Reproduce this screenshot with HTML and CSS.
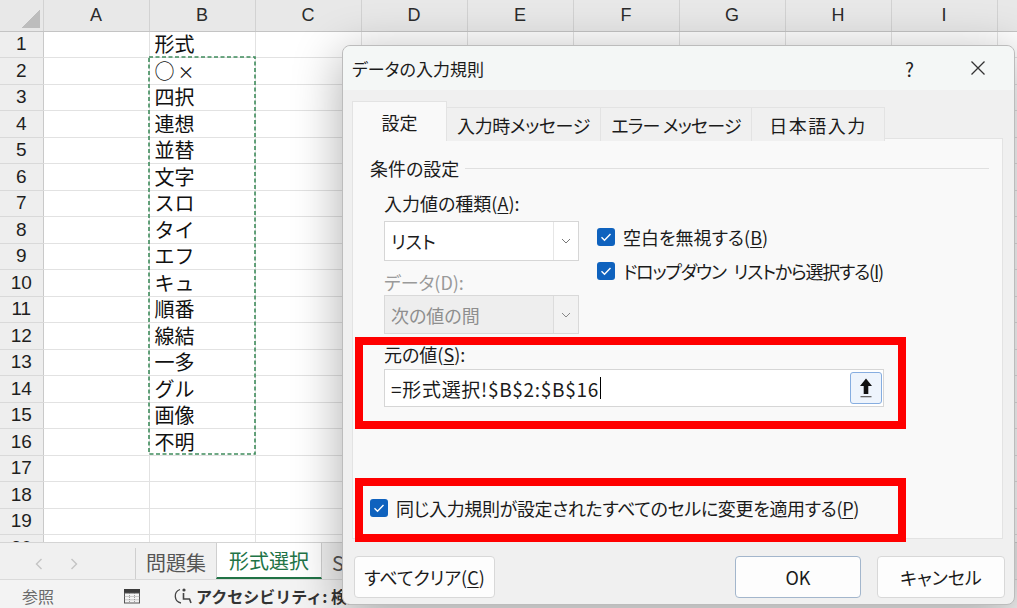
FILE: index.html
```html
<!DOCTYPE html>
<html lang="ja">
<head>
<meta charset="utf-8">
<title>データの入力規則</title>
<link rel="stylesheet" href="styles.css">
</head>
<body>
<div class="app">
  <div class="sheet">
    <table class="grid">
      <colgroup><col class="rhc"><col class="cw" span="10"></colgroup>
      <thead>
        <tr><th class="corner"></th><th>A</th><th>B</th><th>C</th><th>D</th><th>E</th><th>F</th><th>G</th><th>H</th><th>I</th><th>J</th></tr>
      </thead>
      <tbody>
        <tr><th>1</th><td></td><td>形式</td><td></td><td></td><td></td><td></td><td></td><td></td><td></td><td></td></tr>
        <tr><th>2</th><td></td><td>○<span class="x">×</span></td><td></td><td></td><td></td><td></td><td></td><td></td><td></td><td></td></tr>
        <tr><th>3</th><td></td><td>四択</td><td></td><td></td><td></td><td></td><td></td><td></td><td></td><td></td></tr>
        <tr><th>4</th><td></td><td>連想</td><td></td><td></td><td></td><td></td><td></td><td></td><td></td><td></td></tr>
        <tr><th>5</th><td></td><td>並替</td><td></td><td></td><td></td><td></td><td></td><td></td><td></td><td></td></tr>
        <tr><th>6</th><td></td><td>文字</td><td></td><td></td><td></td><td></td><td></td><td></td><td></td><td></td></tr>
        <tr><th>7</th><td></td><td>スロ</td><td></td><td></td><td></td><td></td><td></td><td></td><td></td><td></td></tr>
        <tr><th>8</th><td></td><td>タイ</td><td></td><td></td><td></td><td></td><td></td><td></td><td></td><td></td></tr>
        <tr><th>9</th><td></td><td>エフ</td><td></td><td></td><td></td><td></td><td></td><td></td><td></td><td></td></tr>
        <tr><th>10</th><td></td><td>キュ</td><td></td><td></td><td></td><td></td><td></td><td></td><td></td><td></td></tr>
        <tr><th>11</th><td></td><td>順番</td><td></td><td></td><td></td><td></td><td></td><td></td><td></td><td></td></tr>
        <tr><th>12</th><td></td><td>線結</td><td></td><td></td><td></td><td></td><td></td><td></td><td></td><td></td></tr>
        <tr><th>13</th><td></td><td>一多</td><td></td><td></td><td></td><td></td><td></td><td></td><td></td><td></td></tr>
        <tr><th>14</th><td></td><td>グル</td><td></td><td></td><td></td><td></td><td></td><td></td><td></td><td></td></tr>
        <tr><th>15</th><td></td><td>画像</td><td></td><td></td><td></td><td></td><td></td><td></td><td></td><td></td></tr>
        <tr><th>16</th><td></td><td>不明</td><td></td><td></td><td></td><td></td><td></td><td></td><td></td><td></td></tr>
        <tr><th>17</th><td></td><td></td><td></td><td></td><td></td><td></td><td></td><td></td><td></td><td></td></tr>
        <tr><th>18</th><td></td><td></td><td></td><td></td><td></td><td></td><td></td><td></td><td></td><td></td></tr>
        <tr><th>19</th><td></td><td></td><td></td><td></td><td></td><td></td><td></td><td></td><td></td><td></td></tr>
        <tr><th>20</th><td></td><td></td><td></td><td></td><td></td><td></td><td></td><td></td><td></td><td></td></tr>
      </tbody>
    </table>
    <svg class="marquee" viewBox="0 0 108 399" width="108" height="399"><rect x="1" y="1" width="106" height="397" fill="none" stroke="#3f8c5c" stroke-width="1.6" stroke-dasharray="4 2.5"/></svg>
  </div>

  <div class="tabbar">
    <div class="navs">
      <svg width="8" height="12" viewBox="0 0 8 12"><path d="M6.5 1 1.5 6l5 5" fill="none" stroke="#c4c4c4" stroke-width="1.4"/></svg>
      <svg width="8" height="12" viewBox="0 0 8 12"><path d="M1.5 1l5 5-5 5" fill="none" stroke="#c4c4c4" stroke-width="1.4"/></svg>
    </div>
    <div class="stab">問題集</div>
    <div class="stab active">形式選択</div>
    <div class="stab">Sheet3</div>
  </div>

  <div class="statusbar">
    <span class="st-ref">参照</span>
    <svg class="st-ico" width="18" height="16" viewBox="0 0 18 16"><rect x="1" y="1" width="16" height="4" fill="#3b3b3b"/><rect x="1.5" y="5" width="15" height="10" fill="none" stroke="#555" stroke-width="1"/><path d="M6.5 5v10M11.5 5v10M1.5 8.5h15M1.5 11.8h15" stroke="#888" stroke-width=".8" stroke-dasharray="1 1"/></svg>
    <span class="st-acc">
      <svg width="20" height="18" viewBox="0 0 20 18"><path d="M7 2.5A7 7 0 0 0 8 16" fill="none" stroke="#444" stroke-width="1.3"/><circle cx="11" cy="3" r="1.6" fill="#444"/><path d="M10.5 6v6h6l1.5 4" fill="none" stroke="#444" stroke-width="1.6"/></svg>
      <span>アクセシビリティ: 検討が必要です</span>
    </span>
  </div>
</div>

<div class="dialog">
  <div class="titlebar">
    <span class="dtitle">データの入力規則</span>
    <span class="help">?</span>
    <svg class="close" width="16" height="16" viewBox="0 0 16 16"><path d="M1.5 1.5l13 13M14.5 1.5l-13 13" stroke="#333" stroke-width="1.3"/></svg>
  </div>
  <div class="dbody">
    <div class="tabs">
      <div class="tab active">設定</div>
      <div class="tab t2">入力時メッセージ</div>
      <div class="tab t3">エラー メッセージ</div>
      <div class="tab t4">日本語入力</div>
    </div>
    <div class="panel">
      <div class="legend"><span>条件の設定</span><i class="rule"></i></div>
      <div class="criteria">
        <div class="leftcol">
          <div class="lbl">入力値の種類(<u>A</u>):</div>
          <div class="select">
            <span class="sv">リスト</span>
            <span class="sbtn"><svg width="10" height="6" viewBox="0 0 10 6"><path d="M1 1l4 4 4-4" fill="none" stroke="#777" stroke-width="1"/></svg></span>
          </div>
          <div class="lbl dis">データ(D):</div>
          <div class="select disabled">
            <span class="sv">次の値の間</span>
            <span class="sbtn"><svg width="10" height="6" viewBox="0 0 10 6"><path d="M1 1l4 4 4-4" fill="none" stroke="#888" stroke-width="1"/></svg></span>
          </div>
        </div>
        <div class="rightcol">
          <div class="cb"><span class="box"><svg width="18" height="18" viewBox="0 0 18 18"><path d="M4.5 9.3l3 3 6-6.3" fill="none" stroke="#fff" stroke-width="1.4"/></svg></span><span>空白を無視する(<u>B</u>)</span></div>
          <div class="cb"><span class="box"><svg width="18" height="18" viewBox="0 0 18 18"><path d="M4.5 9.3l3 3 6-6.3" fill="none" stroke="#fff" stroke-width="1.4"/></svg></span><span class="tight">ドロップダウン リストから選択する(<u>I</u>)</span></div>
        </div>
      </div>
      <div class="source">
        <div class="lbl">元の値(<u>S</u>):</div>
        <div class="input">
          <span class="iv">=形式選択!$B$2:$B$16</span><span class="caret"></span>
          <span class="pick"><svg width="14" height="22" viewBox="0 0 14 22"><path d="M7 1.5 13 9H9.3v8H4.7V9H1z" fill="#111"/><rect x="1.5" y="19" width="11" height="1.3" fill="#666"/></svg></span>
        </div>
      </div>
      <div class="cb apply"><span class="box"><svg width="18" height="18" viewBox="0 0 18 18"><path d="M4.5 9.3l3 3 6-6.3" fill="none" stroke="#fff" stroke-width="1.4"/></svg></span><span class="snug">同じ入力規則が設定されたすべてのセルに変更を適用する(<u>P</u>)</span></div>
    </div>
    <div class="buttons">
      <button class="btn">すべてクリア(<u>C</u>)</button>
      <span class="spacer"></span>
      <button class="btn ok">OK</button>
      <button class="btn cancel">キャンセル</button>
    </div>
  </div>
  <div class="mark m1"></div>
  <div class="mark m2"></div>
</div>
</body>
</html>
```

FILE: styles.css
```css
* { box-sizing: border-box; }
html, body { margin: 0; padding: 0; }
body {
  width: 1017px;
  height: 608px;
  overflow: hidden;
  position: relative;
  background: #fff;
  font-family: "Noto Sans CJK JP", "Noto Sans", sans-serif;
}

.app { display: flex; flex-direction: column; height: 608px; }

/* ---------- sheet ---------- */
.sheet { position: relative; height: 542px; overflow: hidden; flex: none; }
.grid { border-collapse: collapse; table-layout: fixed; width: 1103px; }
.grid col.rhc { width: 43px; }
.grid col.cw { width: 106px; }
.grid thead th {
  height: 31px;
  padding: 0;
  background: #e8e8e8;
  border-right: 1px solid #d2d2d2;
  border-bottom: 1px solid #c4c4c4;
  font: 18px "Liberation Sans", Arial, sans-serif;
  color: #2b2b2b;
  font-weight: normal;
}
.grid thead th.corner {
  background: #e8e8e8 linear-gradient(135deg, transparent 50%, #bdbdbd 50%) no-repeat right 3px bottom 3px / 20px 18px;
}
.grid tbody tr { height: 26.5px; }
.grid tbody th {
  padding: 0;
  background: #eeeeee;
  border-right: 1px solid #c9c9c9;
  border-bottom: 1px solid #d9d9d9;
  font: 19px "Liberation Sans", Arial, sans-serif;
  color: #1f1f1f;
  font-weight: normal;
}
.grid td {
  padding: 0 0 0 5px;
  border-right: 1px solid #e2e2e2;
  border-bottom: 1px solid #e2e2e2;
  font: 20px/1.2 "Noto Sans CJK JP", sans-serif;
  color: #111;
  white-space: nowrap;
}
.grid td .x { font-size: 17px; margin-left: 3px; }
.marquee { position: absolute; left: 148px; top: 56px; }

/* ---------- sheet tabs ---------- */
.tabbar {
  height: 37px;
  flex: none;
  display: flex;
  align-items: stretch;
  background: #f0f0f0;
  border-top: 1px solid #d4d4d4;
  font: 20px "Noto Sans CJK JP", sans-serif;
}
.navs {
  width: 136px;
  display: flex;
  align-items: center;
  gap: 27px;
  padding-left: 35px;
  border-right: 1px solid #cfcfcf;
  margin: 5px 0 0;
}
.stab {
  padding: 0 10px;
  display: flex;
  align-items: center;
  color: #555;
  border-right: 1px solid #cfcfcf;
  margin-top: 2px;
}
.stab.active {
  padding: 0 12px;
  background: #fff;
  color: #217346;
  border-bottom: 2px solid #217346;
  border-left: 1px solid #cfcfcf;
  margin-left: -1px;
  margin-top: 0;
}

/* ---------- status bar ---------- */
.statusbar {
  flex: 1;
  display: flex;
  align-items: center;
  background: #f3f3f3;
  border-top: 1px solid #dadada;
  padding-left: 22px;
  padding-top: 4px;
  font: 16px "Noto Sans CJK JP", sans-serif;
  white-space: nowrap;
}
.st-ref { color: #6a6a6a; width: 101px; }
.st-ico { margin-right: 32px; }
.st-acc { display: flex; align-items: center; gap: 3px; color: #333; font-weight: 600; }

/* ---------- dialog ---------- */
.dialog {
  position: absolute;
  left: 342px;
  top: 45px;
  width: 673px;
  height: 560px;
  background: #f0f0f0;
  border: 1px solid #bcbcbc;
  border-radius: 8px;
  box-shadow: 0 10px 50px rgba(0, 0, 0, 0.33);
  display: flex;
  flex-direction: column;
  font-family: "Noto Sans CJK JP", sans-serif;
  font-feature-settings: "palt";
  font-size: 18px;
  color: #1b1b1b;
}
.titlebar {
  height: 44px;
  flex: none;
  display: flex;
  align-items: center;
  padding-left: 9px;
  background: #f4f7f6;
  border-radius: 8px 8px 0 0;
}
.dtitle { font-size: 17px; flex: 1; }
.help { font-size: 19px; margin-right: 56px; color: #222; }
.close { margin-right: 28px; }

.dbody { flex: 1; display: flex; flex-direction: column; padding: 11px 9px 0 9px; }
.tabs { display: flex; align-items: flex-end; height: 40px; position: relative; z-index: 1; }
.tab {
  height: 34px;
  flex: none;
  display: flex;
  align-items: center;
  justify-content: center;
  background: #f0f0f0;
  border: 1px solid #e3e3e3;
  border-bottom: none;
  border-left: none;
  white-space: nowrap;
}
.tab.active {
  width: 95px;
  height: 40px;
  background: #f9f9f9;
  border-left: 1px solid #e3e3e3;
}
.tab.t2 { width: 154px; letter-spacing: -0.4px; }
.tab.t3 { width: 151px; letter-spacing: -0.8px; }
.tab.t4 { width: 133px; letter-spacing: 1.5px; }
.panel {
  height: 401px;
  margin-top: -3px;
  margin-right: 2px;
  background: #f9f9f9;
  border: 1px solid #e3e3e3;
  padding: 16px 13px 17px 17px;
  display: flex;
  flex-direction: column;
}
.legend { display: flex; align-items: center; gap: 6px; height: 26px; }
.rule { flex: 1; height: 1px; background: #e0e0e0; }

.criteria { display: flex; gap: 18px; padding-left: 14px; margin-top: 9px; }
.leftcol { width: 195px; display: flex; flex-direction: column; }
.lbl { height: 26px; line-height: 26px; white-space: nowrap; }
.lbl.dis { color: #9a9a9a; margin-top: 8px; }
.select {
  margin-top: 5px;
  height: 40px;
  display: flex;
  align-items: stretch;
  background: #fff;
  border: 1px solid #d6d6d6;
}
.select .sv { flex: 1; display: flex; align-items: center; padding-left: 6px; }
.select .sbtn { width: 25px; display: flex; align-items: center; justify-content: center; border-left: 1px solid #e6e6e6; }
.select.disabled { margin-top: 0; height: 39px; background: #eeeeee; color: #8e8e8e; border-color: #d9d9d9; }
.select.disabled .sbtn { border-left-color: #dcdcdc; background: #f2f2f2; }

.rightcol { padding-top: 34px; display: flex; flex-direction: column; gap: 8px; }
.cb { display: flex; align-items: center; gap: 8px; height: 26px; white-space: nowrap; }
.tight { letter-spacing: -1.2px; word-spacing: 5px; }
.snug { letter-spacing: -0.35px; }
.box { width: 18px; height: 18px; border-radius: 3px; background: #0f62be; display: flex; flex: none; }
u { text-underline-offset: 2px; text-decoration-thickness: 1px; }

.source { padding-left: 14px; margin-top: 7px; }
.input {
  margin-top: 2px;
  width: 500px;
  height: 38px;
  background: #fff;
  border: 1px solid #d6d6d6;
  display: flex;
  align-items: center;
  padding: 0 1px 0 6px;
}
.iv { white-space: nowrap; font-size: 19px; letter-spacing: 0.7px; font-feature-settings: normal; }
.caret { width: 1px; height: 22px; background: #000; margin-left: 1px; }
.pick {
  margin-left: auto;
  width: 32px;
  height: 32px;
  border: 1px solid #86ade0;
  border-radius: 3px;
  background: #eef4fc;
  display: flex;
  align-items: center;
  justify-content: center;
}
.cb.apply { margin-top: auto; }

.buttons { display: flex; gap: 16px; margin-top: 17px; }
.spacer { flex: 1; }
.btn {
  height: 42px;
  background: #fdfdfd;
  border: 1px solid #d8d8d8;
  border-radius: 4px;
  font: inherit;
  font-feature-settings: "palt";
  color: #1b1b1b;
  padding: 0;
  margin: 0;
}
.btn:first-child { width: 141px; margin-left: 2px; }
.btn.ok { width: 126px; border-color: #a3b6cc; }
.btn.cancel { width: 128px; }

.mark { position: absolute; left: 12px; width: 551px; border: 8px solid #ff0000; pointer-events: none; }
.m1 { top: 291px; height: 92px; }
.m2 { top: 432px; height: 64px; }
```
